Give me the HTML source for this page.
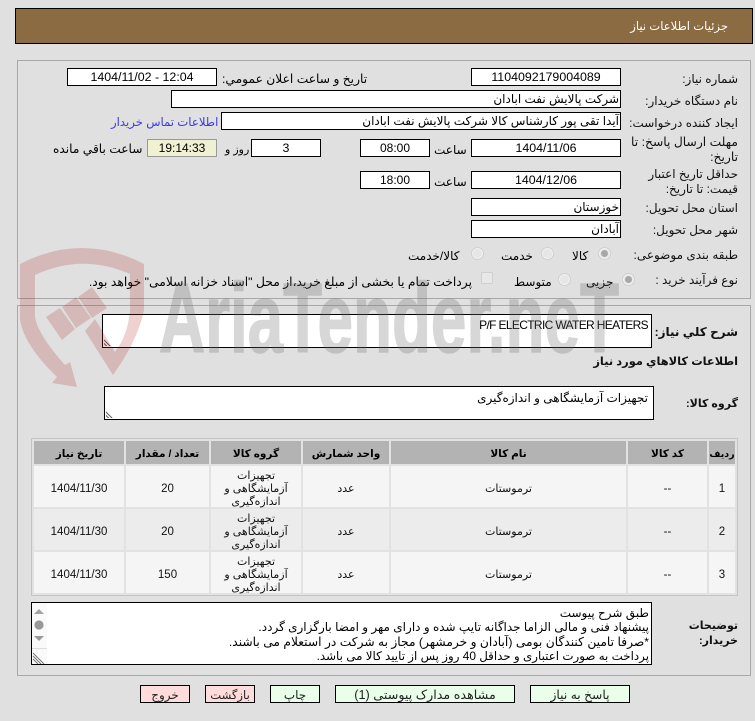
<!DOCTYPE html>
<html lang="fa">
<head>
<meta charset="utf-8">
<title>جزئیات اطلاعات نیاز</title>
<style>
html,body{margin:0;padding:0;background:#e0e0e0;}
body{width:755px;height:721px;position:relative;overflow:hidden;font-family:"Liberation Sans","DejaVu Sans",sans-serif;font-size:12px;color:#000;}
.a{position:absolute;white-space:nowrap;}
.l{position:absolute;direction:rtl;text-align:right;right:17px;white-space:nowrap;font-size:12px;line-height:18px;color:#111;}
.b{position:absolute;box-sizing:border-box;background:#fff;border:1px solid #000;height:18px;line-height:16px;font-size:12.4px;white-space:nowrap;overflow:hidden;}
.c{text-align:center;}
.r{direction:rtl;text-align:right;padding-right:1px;font-size:12px;}
.p{position:absolute;box-sizing:border-box;border:1px solid #a8a8a8;left:17px;width:734px;}
.radio{position:absolute;box-sizing:border-box;width:13px;height:13px;border-radius:50%;background:#e6e6e6;border:1px solid #d0d0d0;box-shadow:inset 0 0 0 1px #f2f2f2;}
.radio.on:after{content:"";position:absolute;left:2px;top:2px;width:7px;height:7px;border-radius:50%;background:#a8a8a8;}
.cell{position:absolute;box-sizing:border-box;display:flex;align-items:center;justify-content:center;text-align:center;direction:rtl;font-size:11px;line-height:13px;color:#111;padding-top:5px;}
.n{font-size:11.5px;}
.h{background:#b3b3b3;font-weight:bold;height:23px;top:441px;font-size:10.5px;padding-top:4px;color:#000;}
.btn{position:absolute;box-sizing:border-box;top:685px;height:18px;border:1px solid #000;text-align:center;direction:rtl;font-size:12px;line-height:19px;color:#222;white-space:nowrap;overflow:hidden;}
.g{background:#eaffea;}
.q{background:#ffdcdc;}
.grip{position:absolute;left:1px;bottom:1px;width:8px;height:8px;background:repeating-linear-gradient(45deg,transparent 0,transparent 1.4px,#666 1.4px,#666 2.4px);clip-path:polygon(0 0,100% 100%,0 100%);}
</style>
</head>
<body>

<div class="a" style="left:15px;top:8px;width:738px;height:36px;box-sizing:border-box;background:#8b6b42;border:1px solid #000;"></div>
<div class="a" style="right:27px;top:18px;direction:rtl;color:#fff;font-size:11.6px;line-height:18px;">جزئیات اطلاعات نیاز</div>

<div class="p" style="top:60px;height:239px;"></div>
<div class="p" style="top:305px;height:371px;"></div>

<div class="l" style="top:70px;">شماره نیاز:</div>
<div class="l" style="top:92px;">نام دستگاه خریدار:</div>
<div class="l" style="top:114px;">ایجاد کننده درخواست:</div>
<div class="l" style="top:135px;line-height:14.5px;white-space:normal;width:118px;font-size:12.3px;">مهلت ارسال پاسخ: تا تاریخ:</div>
<div class="l" style="top:167px;line-height:14.5px;white-space:normal;width:118px;">حداقل تاریخ اعتبار قیمت: تا تاریخ:</div>
<div class="l" style="top:199px;">استان محل تحویل:</div>
<div class="l" style="top:221px;">شهر محل تحویل:</div>
<div class="l" style="top:246px;">طبقه بندی موضوعی:</div>
<div class="l" style="top:271px;">نوع فرآیند خرید :</div>

<div class="b c" style="left:471px;top:68px;width:150px;">1104092179004089</div>
<div class="b r" style="left:171px;top:90px;width:450px;">شرکت پالایش نفت ابادان</div>
<div class="b r" style="left:221px;top:112px;width:400px;">آیدا تقی پور کارشناس کالا شرکت پالایش نفت ابادان</div>
<div class="b c" style="left:471px;top:139px;width:150px;">1404/11/06</div>
<div class="b c" style="left:471px;top:171px;width:150px;">1404/12/06</div>
<div class="b r" style="left:471px;top:198px;width:150px;">خوزستان</div>
<div class="b r" style="left:471px;top:220px;width:150px;">آبادان</div>

<div class="a" style="left:434px;top:141px;direction:rtl;line-height:18px;">ساعت</div>
<div class="a" style="left:434px;top:173px;direction:rtl;line-height:18px;">ساعت</div>
<div class="b c" style="left:360px;top:139px;width:70px;font-size:12px;">08:00</div>
<div class="b c" style="left:360px;top:171px;width:70px;font-size:12px;">18:00</div>
<div class="b c" style="left:251px;top:139px;width:70px;">3</div>
<div class="a" style="left:225px;top:141px;direction:rtl;line-height:18px;font-size:11px;">روز و</div>
<div class="b c" style="left:147px;top:139px;width:70px;background:#f0f0d2;border-color:#999;font-size:12px;">19:14:33</div>
<div class="a" style="left:53px;top:140px;direction:rtl;line-height:18px;font-size:12.2px;">ساعت باقي مانده</div>

<div class="a" style="left:222px;top:70px;direction:rtl;line-height:18px;font-size:12.25px;">تاریخ و ساعت اعلان عمومي:</div>
<div class="b c" style="left:67px;top:68px;width:150px;">1404/11/02 - 12:04</div>
<div class="a" style="left:111px;top:114px;direction:rtl;color:#3a3ae6;line-height:18px;font-size:11.7px;">اطلاعات تماس خریدار</div>

<div class="radio on" style="left:598px;top:247px;"></div>
<div class="a" style="left:572px;top:247px;direction:rtl;line-height:18px;">کالا</div>
<div class="radio" style="left:541px;top:247px;"></div>
<div class="a" style="left:501px;top:247px;direction:rtl;line-height:18px;">خدمت</div>
<div class="radio" style="left:471px;top:247px;"></div>
<div class="a" style="left:408px;top:247px;direction:rtl;line-height:18px;">کالا/خدمت</div>

<div class="radio on" style="left:622px;top:273px;"></div>
<div class="a" style="left:586px;top:273px;direction:rtl;line-height:18px;">جزیی</div>
<div class="radio" style="left:558px;top:273px;"></div>
<div class="a" style="left:514px;top:273px;direction:rtl;line-height:18px;">متوسط</div>
<div class="a" style="left:481px;top:272px;width:12px;height:12px;box-sizing:border-box;background:#e8e8e8;border:1px solid #cfcfcf;border-radius:2px;"></div>
<div class="a" style="right:283px;top:273px;direction:rtl;line-height:18px;font-size:12.3px;">پرداخت تمام یا بخشی از مبلغ خرید،از محل "اسناد خزانه اسلامی" خواهد بود.</div>

<div class="l" style="top:323px;font-weight:bold;">شرح کلي نياز:</div>
<div class="b" style="left:102px;top:314px;width:550px;height:34px;text-align:right;padding-right:3px;font-size:12px;line-height:20px;letter-spacing:-.65px;">P/F ELECTRIC WATER HEATERS<span class="grip"></span></div>
<div class="l" style="top:353px;font-weight:bold;font-size:11.4px;">اطلاعات کالاهاي مورد نياز</div>
<div class="l" style="top:395px;font-weight:bold;font-size:11px;">گروه کالا:</div>
<div class="b r" style="left:104px;top:386px;width:550px;height:34px;padding-right:5px;font-size:12px;line-height:22px;">تجهیزات آزمایشگاهی و اندازه‌گیری<span class="grip"></span></div>

<div class="a" style="left:31px;top:438px;width:707px;height:158px;box-sizing:border-box;background:#e2e2e2;border:1px solid #c4c4c4;"></div>

<div class="cell h" style="left:34px;width:90px;">تاریخ نیاز</div>
<div class="cell h" style="left:126px;width:83px;">تعداد / مقدار</div>
<div class="cell h" style="left:211px;width:90px;">گروه کالا</div>
<div class="cell h" style="left:303px;width:86px;">واحد شمارش</div>
<div class="cell h" style="left:391px;width:235px;">نام کالا</div>
<div class="cell h" style="left:628px;width:79px;">کد کالا</div>
<div class="cell h" style="left:709px;width:26px;font-size:9.5px;">ردیف</div>

<div class="cell n" style="left:34px;top:466px;width:90px;height:41px;background:#f5f5f5;">1404/11/30</div>
<div class="cell n" style="left:126px;top:466px;width:83px;height:41px;background:#f5f5f5;">20</div>
<div class="cell" style="left:211px;top:466px;width:90px;height:41px;background:#f5f5f5;">تجهیزات آزمایشگاهی و اندازه‌گیری</div>
<div class="cell" style="left:303px;top:466px;width:86px;height:41px;background:#f5f5f5;">عدد</div>
<div class="cell" style="left:391px;top:466px;width:235px;height:41px;background:#f5f5f5;">ترموستات</div>
<div class="cell n" style="left:628px;top:466px;width:79px;height:41px;background:#f5f5f5;">--</div>
<div class="cell n" style="left:709px;top:466px;width:26px;height:41px;background:#f5f5f5;">1</div>

<div class="cell n" style="left:34px;top:509px;width:90px;height:41px;background:#ececec;">1404/11/30</div>
<div class="cell n" style="left:126px;top:509px;width:83px;height:41px;background:#ececec;">20</div>
<div class="cell" style="left:211px;top:509px;width:90px;height:41px;background:#ececec;">تجهیزات آزمایشگاهی و اندازه‌گیری</div>
<div class="cell" style="left:303px;top:509px;width:86px;height:41px;background:#ececec;">عدد</div>
<div class="cell" style="left:391px;top:509px;width:235px;height:41px;background:#ececec;">ترموستات</div>
<div class="cell n" style="left:628px;top:509px;width:79px;height:41px;background:#ececec;">--</div>
<div class="cell n" style="left:709px;top:509px;width:26px;height:41px;background:#ececec;">2</div>

<div class="cell n" style="left:34px;top:552px;width:90px;height:41px;background:#f5f5f5;">1404/11/30</div>
<div class="cell n" style="left:126px;top:552px;width:83px;height:41px;background:#f5f5f5;">150</div>
<div class="cell" style="left:211px;top:552px;width:90px;height:41px;background:#f5f5f5;">تجهیزات آزمایشگاهی و اندازه‌گیری</div>
<div class="cell" style="left:303px;top:552px;width:86px;height:41px;background:#f5f5f5;">عدد</div>
<div class="cell" style="left:391px;top:552px;width:235px;height:41px;background:#f5f5f5;">ترموستات</div>
<div class="cell n" style="left:628px;top:552px;width:79px;height:41px;background:#f5f5f5;">--</div>
<div class="cell n" style="left:709px;top:552px;width:26px;height:41px;background:#f5f5f5;">3</div>

<div class="l" style="top:619px;font-weight:bold;font-size:11px;line-height:14.5px;white-space:normal;width:60px;">توضیحات خریدار:</div>
<div class="b r" style="left:31px;top:602px;width:621px;height:63px;padding:3px 2px 0 0;font-size:12px;line-height:14.4px;">طبق شرح پیوست<br>پیشنهاد فنی و مالی الزاما جداگانه تایپ شده و دارای مهر و امضا بارگزاری گردد.<br><span style="font-size:12.25px;">*صرفا تامین کنندگان بومی (آبادان و خرمشهر) مجاز به شرکت در استعلام می باشند.</span><br><span style="font-size:11.85px;">پرداخت به صورت اعتباری و حداقل 40 روز پس از تایید کالا می باشد.</span></div>
<svg class="a" style="left:32px;top:603px;" width="16" height="61" viewBox="0 0 16 61">
<rect width="15" height="61" fill="#fafafa"/>
<path d="M2 11 L7 6 L12 11Z" fill="#a3a3a3"/>
<circle cx="7" cy="22" r="4.6" fill="#999"/>
<path d="M2 33 L12 33 L7 38Z" fill="#999"/>
<rect y="45" width="15" height="1" fill="#ddd"/>
<path d="M1 53 L9 61 M1 56 L6 61 M1 50 L12 61" stroke="#777" stroke-width="1"/>
</svg>

<div class="btn q" style="left:140px;width:50px;">خروج</div>
<div class="btn q" style="left:205px;width:50px;font-size:11.6px;">بازگشت</div>
<div class="btn g" style="left:270px;width:50px;">چاپ</div>
<div class="btn g" style="left:335px;width:180px;font-size:12.7px;">مشاهده مدارک پیوستی (1)</div>
<div class="btn g" style="left:530px;width:100px;font-size:12.3px;">پاسخ به نیاز</div>

<svg class="a" style="left:0;top:0;pointer-events:none;" width="755" height="721" viewBox="0 0 755 721">
<path fill="rgba(170,30,30,.2)" d="M20 264 Q82 232 144 264 L144 310 Q138 340 113 375 L85 331 L95 319 L115 352 Q128 335 130 310 L130 274 Q82 253 35 275 L35 317 Q38 335 65 365 L70 362 L77 387 L52 383 L57 377 Q24 345 20 320 Z"/>
<path fill="rgba(170,30,30,.2)" d="M46 317 L60 308 L75 329 L62 340 Z M62 307 L76 297 L91 318 L76 328 Z M78 297 L92 287 L107 308 L92 318 Z"/>
<g opacity=".27">
<text x="159" y="352" font-family="Liberation Sans" font-weight="bold" font-size="98" fill="#6e6e6e" stroke="#6e6e6e" stroke-width="1.5" textLength="460" lengthAdjust="spacingAndGlyphs">AriaTender.neT</text>
</g>
</svg>

</body>
</html>
